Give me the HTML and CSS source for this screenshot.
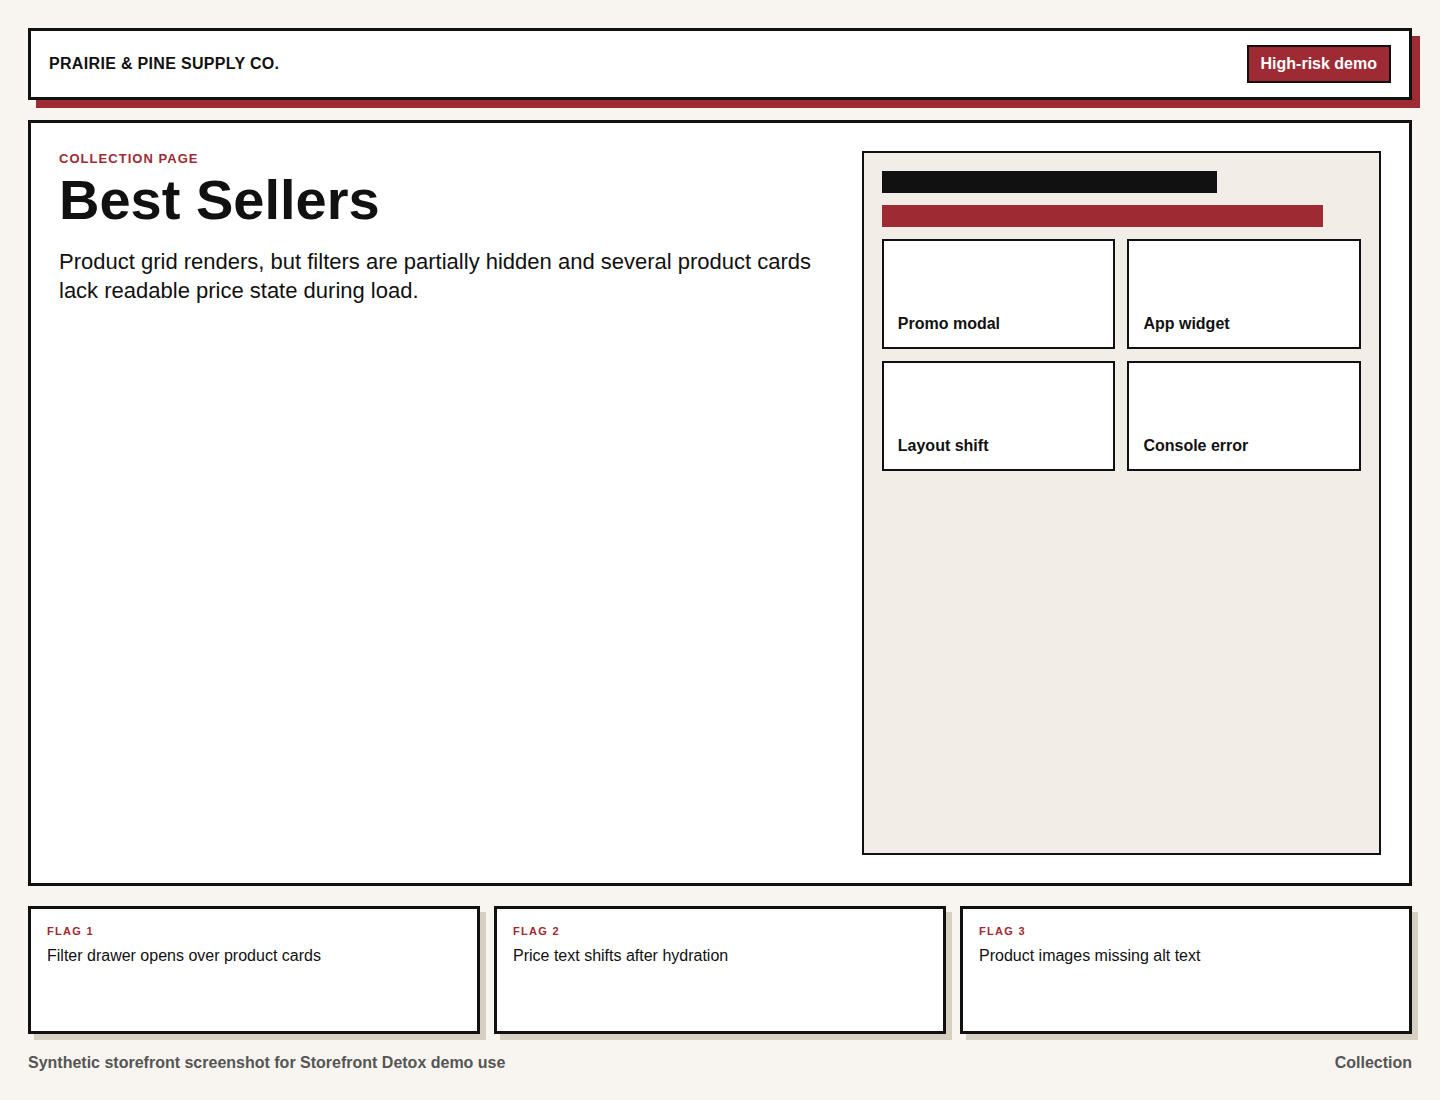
FILE: index.html
```html
<!DOCTYPE html>
<html lang="en">
<head>
    <meta charset="UTF-8">
    <meta name="viewport" content="width=device-width, initial-scale=1.0">
    <title>Best Sellers</title>
    <link rel="stylesheet" href="styles.css">
</head>
<body>
    <div class="page">
        <header class="topbar">
            <div class="brand">PRAIRIE &amp; PINE SUPPLY CO.</div>
            <div class="badge">High-risk demo</div>
        </header>

        <main class="panel">
            <div class="intro">
                <div class="eyebrow">COLLECTION PAGE</div>
                <h1>Best Sellers</h1>
                <p>Product grid renders, but filters are partially hidden and several product cards lack readable price state during load.</p>
            </div>
            <div class="preview">
                <div class="bar bar-dark"></div>
                <div class="bar bar-red"></div>
                <div class="tiles">
                    <div class="tile">Promo modal</div>
                    <div class="tile">App widget</div>
                    <div class="tile">Layout shift</div>
                    <div class="tile">Console error</div>
                </div>
            </div>
        </main>

        <section class="flags">
            <div class="flag">
                <div class="flag-num">FLAG 1</div>
                <div class="flag-text">Filter drawer opens over product cards</div>
            </div>
            <div class="flag">
                <div class="flag-num">FLAG 2</div>
                <div class="flag-text">Price text shifts after hydration</div>
            </div>
            <div class="flag">
                <div class="flag-num">FLAG 3</div>
                <div class="flag-text">Product images missing alt text</div>
            </div>
        </section>

        <footer class="foot">
            <span>Synthetic storefront screenshot for Storefront Detox demo use</span>
            <span>Collection</span>
        </footer>
    </div>
</body>
</html>
```

FILE: styles.css
```css
* {
    padding: 0;
    margin: 0;
    box-sizing: border-box;
}

body {
    background-color: #f8f5f0;
    color: #111;
    font-family: "Liberation Sans", Arial, Helvetica, sans-serif;
}

.page {
    padding: 28px;
    display: flex;
    flex-direction: column;
    gap: 20px;
}

/* top bar */
.topbar {
    height: 72px;
    background-color: #fff;
    border: 3px solid #111;
    box-shadow: 8px 8px 0 #9e2a33;
    padding: 0 18px;
    display: flex;
    align-items: center;
    justify-content: space-between;
}

.brand {
    font-size: 16px;
    font-weight: 700;
    letter-spacing: 0.02em;
}

.badge {
    height: 38px;
    padding: 0 12px;
    background-color: #9e2a33;
    border: 2px solid #111;
    color: #fff;
    font-size: 16px;
    font-weight: 700;
    display: flex;
    align-items: center;
}

/* main panel */
.panel {
    height: 766px;
    background-color: #fff;
    border: 3px solid #111;
    padding: 28px;
    display: grid;
    grid-template-columns: 1.5fr 1fr;
    gap: 24px;
}

.eyebrow {
    color: #9e2a33;
    font-size: 13px;
    font-weight: 700;
    letter-spacing: 0.08em;
}

.intro h1 {
    font-size: 56px;
    line-height: 1.1;
    font-weight: 700;
    margin-top: 3px;
}

.intro p {
    font-size: 22px;
    line-height: 29px;
    margin-top: 16px;
}

.preview {
    background-color: #f2ede7;
    border: 2px solid #111;
    padding: 18px;
}

.bar {
    height: 22px;
    margin-bottom: 12px;
}

.bar-dark {
    width: 70%;
    background-color: #111;
}

.bar-red {
    width: 92%;
    background-color: #9e2a33;
}

.tiles {
    display: grid;
    grid-template-columns: 1fr 1fr;
    gap: 12px;
}

.tile {
    height: 110px;
    background-color: #fff;
    border: 2px solid #111;
    padding: 0 14px 13px;
    display: flex;
    align-items: flex-end;
    font-size: 16px;
    font-weight: 700;
    line-height: 20px;
}

/* flags row */
.flags {
    display: grid;
    grid-template-columns: repeat(3, 1fr);
    gap: 14px;
}

.flag {
    height: 128px;
    background-color: #fff;
    border: 3px solid #111;
    box-shadow: 6px 6px 0 #d8cfc3;
    padding: 16px 16px;
}

.flag-num {
    color: #9e2a33;
    font-size: 11px;
    font-weight: 700;
    letter-spacing: 0.12em;
}

.flag-text {
    font-size: 16px;
    margin-top: 10px;
}

.foot {
    display: flex;
    justify-content: space-between;
    color: #555;
    font-size: 16px;
    font-weight: 700;
}
```
